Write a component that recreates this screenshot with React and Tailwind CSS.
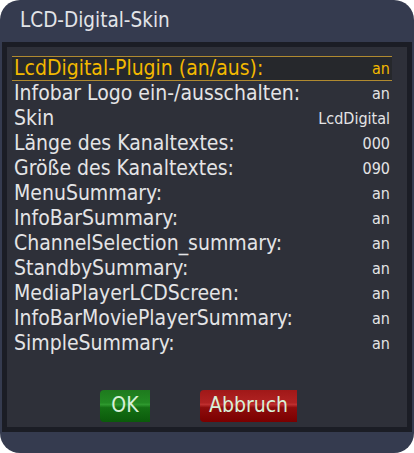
import React from "react";

const rows = [
  ["LcdDigital-Plugin (an/aus):", "an"],
  ["Infobar Logo ein-/ausschalten:", "an"],
  ["Skin", "LcdDigital"],
  ["Länge des Kanaltextes:", "000"],
  ["Größe des Kanaltextes:", "090"],
  ["MenuSummary:", "an"],
  ["InfoBarSummary:", "an"],
  ["ChannelSelection_summary:", "an"],
  ["StandbySummary:", "an"],
  ["MediaPlayerLCDScreen:", "an"],
  ["InfoBarMoviePlayerSummary:", "an"],
  ["SimpleSummary:", "an"],
];

export default function App() {
  return (
    <div className="w-[414px] h-[453px] bg-white">
      <div
        className="w-[414px] h-[453px] bg-[#353b4f] rounded-[20px] flex flex-col"
        style={{ fontFamily: '"DejaVu Sans Condensed", "DejaVu Sans", sans-serif' }}
      >
        <div className="h-[42px] pl-[20px] flex items-center text-[20.5px] text-[#e2e4e8] pb-[2px]">
          LCD-Digital-Skin
        </div>
        <div className="ml-[2px] w-[410px] h-[390px] border-[5px] border-[#1b1d25] bg-[#2e3039] flex flex-col">
          <div className="pt-[9px] pl-[5px] pr-[15px] flex flex-col">
            {rows.map(([label, value], i) => (
              <div
                key={i}
                className={
                  i === 0
                    ? "h-[25px] flex items-center justify-between px-[2px] bg-[#26282c] border-y border-[#b08a30] text-[#f3b800]"
                    : "h-[25px] flex items-center justify-between px-[2px] text-[#e4e4e6]"
                }
              >
                <span className="text-[21px] leading-none">{label}</span>
                <span className="text-[16px] leading-none">{value}</span>
              </div>
            ))}
          </div>
          <div className="flex pl-[93px] gap-[50px] mt-[34px]">
            <div className="w-[50px] h-[32px] rounded-l-[4px] flex items-center justify-center text-[21px] text-[#d8f0d8] bg-[linear-gradient(to_bottom,#1e7a1e_0%,#238a23_40%,#2f9a2f_45%,#147014_55%,#0b5a0b_100%)]">
              OK
            </div>
            <div className="w-[97px] h-[32px] rounded-l-[4px] flex items-center justify-center text-[21px] text-[#d8f0d8] bg-[linear-gradient(to_bottom,#a01818_0%,#b02222_40%,#c03030_45%,#8e0c0c_55%,#7a0000_100%)]">
              Abbruch
            </div>
          </div>
        </div>
      </div>
    </div>
  );
}
